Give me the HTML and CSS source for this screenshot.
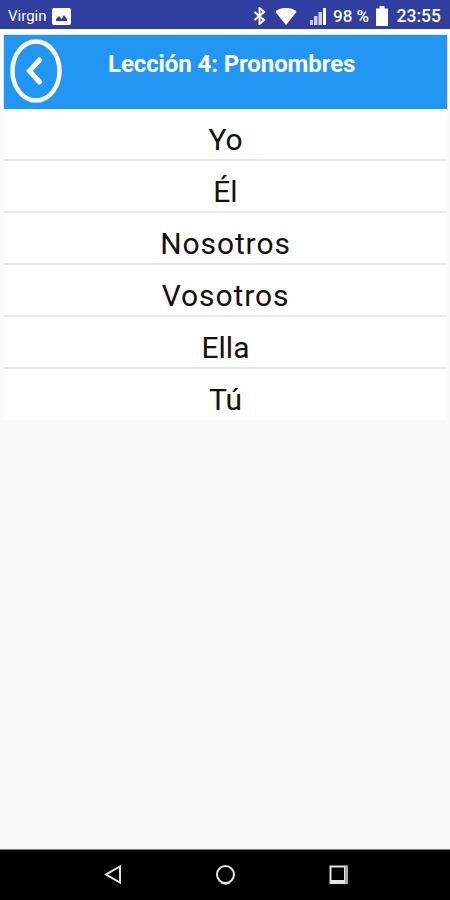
FILE: index.html
```html
<!DOCTYPE html>
<html lang="es">

<head>
    <meta charset="UTF-8">
    <meta name="viewport" content="width=device-width, initial-scale=1.0">
    <title>Lección 4: Pronombres</title>
    <link rel="stylesheet" href="styles.css">
</head>

<body>
    <div class="status-bar">
        <span class="carrier">Virgin</span>
        <svg class="picture" width="19" height="17" viewBox="0 0 19 17">
            <rect width="19" height="17" rx="2" fill="#fff" />
            <path d="M4 13V11L7 8L9.5 11L12 7L15 11V13Z" fill="#303f9f" />
        </svg>
        <svg class="bluetooth" width="13" height="18" viewBox="0 0 13 18">
            <path d="M1.5 5L11 13L6.5 17V1L11 5L1.5 13" fill="none" stroke="#fff" stroke-width="2" />
        </svg>
        <svg class="wifi" width="22" height="17" viewBox="0 0 22 17">
            <path d="M0.5 4Q3 0 11 0T21.5 4L11 17Z" fill="#fff" />
        </svg>
        <svg class="signal" width="17" height="18" viewBox="0 0 17 18">
            <path d="M0 13h3v5H0zM4 9h3.5v9H4zM8.5 5H12v13H8.5z" fill="#c9cdea" />
            <path d="M13 1h3v17h-3z" fill="#fff" />
        </svg>
        <span class="percent">98 %</span>
        <svg class="battery" width="12" height="20" viewBox="0 0 12 20">
            <path d="M3.5 0h5v2.5H12V20H0V2.5h3.5z" fill="#fff" />
        </svg>
        <span class="clock">23:55</span>
    </div>

    <div class="content">
        <div class="header">
            <svg class="back" width="52" height="64" viewBox="0 0 52 64">
                <ellipse cx="26" cy="32" rx="23.5" ry="29.5" fill="none" stroke="#fff" stroke-width="4.5" />
                <path d="M29.5 21L19.5 32L29.5 43" fill="none" stroke="#fff" stroke-width="5" stroke-linecap="round" />
            </svg>
            <h1>Lección 4: Pronombres</h1>
        </div>
        <ul class="words">
            <li>Yo</li>
            <li>Él</li>
            <li class="wide">Nosotros</li>
            <li class="wide">Vosotros</li>
            <li>Ella</li>
            <li>Tú</li>
        </ul>
    </div>

    <div class="nav-bar">
        <svg width="20" height="22" viewBox="0 0 20 22">
            <path d="M17 1.5V17.5L3 9.5Z" fill="none" stroke="#e4e4e4" stroke-width="2" />
        </svg>
        <svg width="20" height="22" viewBox="0 0 20 22">
            <circle cx="9.500" cy="9.5" r="8.5" fill="none" stroke="#e4e4e4" stroke-width="2" />
            <path d="M5 17.5Q9.5 20 14 17.5" fill="none" stroke="#e4e4e4" stroke-width="2" />
        </svg>
        <svg width="20" height="22" viewBox="0 0 20 22">
            <path d="M0.5 0.500H19V19H0.5ZM2.5 2.5V15H15V2.5Z" fill="#e4e4e4" fill-rule="evenodd" />
            <path d="M17.5 1V19" stroke="#aaa" stroke-width="3" />
        </svg>
    </div>
</body>

</html>
```
FILE: styles.css
```css
body {
    margin: 0;
    height: 900px;
    display: flex;
    flex-direction: column;
    background: #fafafa;
    font-family: Roboto, sans-serif;
}

.status-bar {
    height: 29px;
    box-sizing: border-box;
    padding: 3px 9px 0 8px;
    display: flex;
    align-items: center;
    background: #303f9f;
    color: #fff;
    white-space: nowrap;
}

.carrier {
    width: 44px;
    font-size: 15px;
}

.bluetooth {
    margin-left: 182px;
}

.wifi {
    margin-left: 9px;
}

.signal {
    margin-left: 13px;
}

.percent {
    margin-left: 6px;
    width: 43px;
    font-size: 17px;
    font-weight: 500;
}

.clock {
    margin-left: auto;
    font-size: 17.5px;
    font-weight: 500;
}

.content {
    flex: 1;
    padding: 0 3px 0 4px;
    border-top: 6px solid #fff;
}

.header {
    height: 74px;
    display: flex;
    background: #2196f3;
    box-shadow: 0 0 0 1px #d4e8fb;
}

.back {
    margin: 4px 0 0 6px;
}

h1 {
    margin: 15px 0 0 46px;
    color: #fff;
    font-size: 24px;
    line-height: 28px;
    font-weight: bold;
    letter-spacing: -0.1px;
    white-space: nowrap;
}

.words {
    margin: 0;
    padding: 0;
    list-style: none;
    background: #fff;
}

.words li {
    height: 52px;
    box-sizing: border-box;
    padding-top: 13px;
    border-bottom: 2px solid #e8e8e8;
    color: #111;
    font-size: 30px;
    line-height: 35px;
    text-align: center;
}

.words li:last-child {
    height: 51px;
    border-bottom: none;
}

.words .wide {
    letter-spacing: 0.9px;
}

.nav-bar {
    height: 51px;
    box-sizing: border-box;
    padding: 15px 101px 0 103px;
    display: flex;
    justify-content: space-between;
    background: #000;
    border-top: 1px solid #777;
}
```
